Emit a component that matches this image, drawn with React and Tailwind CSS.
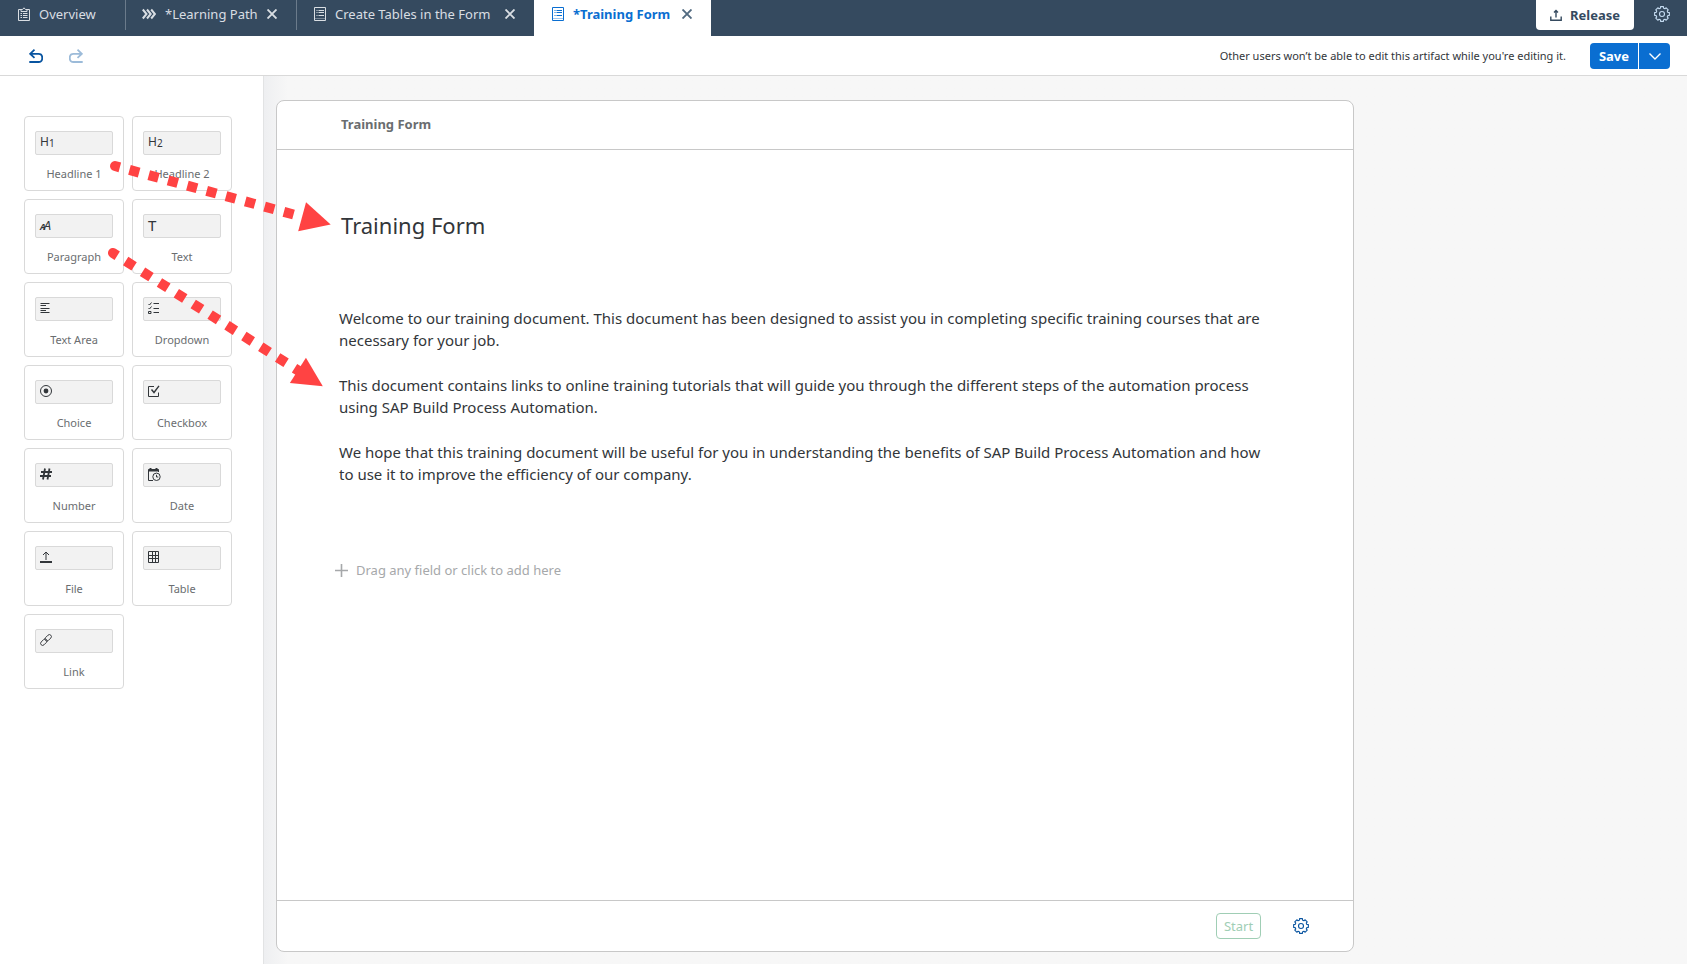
import React from "react";

function Svg({ size = 12, width = size, className = "", children, ...rest }) {
  return (
    <svg
      width={width}
      height={size}
      viewBox={`0 0 ${width} ${size}`}
      fill="none"
      stroke="currentColor"
      strokeWidth="1"
      aria-hidden="true"
      className={`block shrink-0 ${className}`}
      {...rest}
    >
      {children}
    </svg>
  );
}

const gearPath = (() => {
  const teeth = 8;
  const pts = [];
  for (let i = 0; i < teeth; i++) {
    const base = (i * 360) / teeth - 90;
    [
      [-16, 6],
      [-11, 7.5],
      [11, 7.5],
      [16, 6],
    ].forEach(([offset, radius]) => {
      const a = ((base + offset) * Math.PI) / 180;
      pts.push(`${(8 + radius * Math.cos(a)).toFixed(2)} ${(8 + radius * Math.sin(a)).toFixed(2)}`);
    });
  }
  return `M${pts.join("L")}Z`;
})();

const GearIcon = () => (
  <Svg size={16}>
    <path d={gearPath} strokeLinejoin="round" strokeWidth="1.1" />
    <circle cx="8" cy="8" r="2.500" strokeWidth="1.1" />
  </Svg>
);

const OverviewIcon = () => (
  <Svg size={14} width={12}>
    <path d="M3 2.500H.5V13.500H11.500V2.500H9M3 4.500V2.500H4.500L6 .8L7.500 2.500H9V4.500Z" />
    <path d="M2.500 6.500H4M5 6.500H9.500M2.500 8.500H4M5 8.500H9.500M2.500 10.500H4M5 10.500H9.500" />
  </Svg>
);

const FormIcon = () => (
  <Svg size={14} width={12}>
    <path d="M.5 .5H11.500V13.500H.5Z" />
    <path d="M2.500 3.500H3.500M4.500 3.500H10M2.500 5.500H3.500M4.500 5.500H10M2.500 8.500H3.500M4.500 8.500H10" />
    <path d="M1 11.500H11" opacity=".4" />
  </Svg>
);

const ProcessIcon = () => (
  <Svg size={14} strokeWidth="2">
    <path d="M.8 2.500L4.500 7L.8 11.500M5 2.500L8.700 7L5 11.500M9.200 2.500L12.900 7L9.200 11.500" />
  </Svg>
);

const CloseIcon = () => (
  <Svg size={10} strokeWidth="1.900">
    <path d="M.5 .5L9.500 9.500M9.500 .5L.5 9.500" />
  </Svg>
);

const UndoIcon = ({ flipped }) => (
  <Svg size={14} strokeWidth="1.800" className={flipped ? "-scale-x-100" : ""}>
    <path d="M5.500 .7L1.200 4.800L5.500 8.800M1.500 4.800H9.500C14.500 4.800 14.500 13 9.500 13H.3" />
  </Svg>
);

const ReleaseIcon = () => (
  <Svg size={12} strokeWidth="1.400">
    <path d="M.8 7.500V11.200H11.200V7.500M6 8.500V1.500M4 3.500L6 1.500L8 3.500" />
  </Svg>
);

const TextAreaIcon = () => (
  <Svg>
    <path d="M.5 1.500H9.500M.5 3.500H6M.5 6.500H9.500M.5 8.500H6M.5 10.500H9.500" />
  </Svg>
);

const DropdownIcon = () => (
  <Svg>
    <path d="M.5 2L1.500 3L3.500 .5M.5 6L1.500 7L3.500 4.500M.5 9.500H3V11.500H.5Z" />
    <path d="M5.500 1.500H11M5.500 6.500H11M5.500 10.500H11" />
  </Svg>
);

const ChoiceIcon = () => (
  <Svg>
    <circle cx="6" cy="6" r="5.500" />
    <circle cx="6" cy="6" r="2.400" fill="currentColor" stroke="none" />
  </Svg>
);

const CheckboxIcon = () => (
  <Svg>
    <path d="M6 1.500H.5V11.500H10.500V7.500" />
    <path d="M3.500 4.500L6 7.500L11 .8" strokeWidth="1.400" />
  </Svg>
);

const NumberIcon = () => (
  <Svg>
    <path d="M5 .5L3 11.500M9.500 .5L7.500 11.500M1 4H12M0 8H11" strokeWidth="1.800" />
  </Svg>
);

const DateIcon = () => (
  <Svg size={13}>
    <path d="M5 12.500H.5V1.500H10.500V4" />
    <path d="M.5 2.500H10.500M2.500 0V2M8.500 0V2" strokeWidth="2" />
    <circle cx="8.500" cy="8.800" r="3.700" />
    <path d="M8.500 6.800V9H10.300" />
  </Svg>
);

const FileIcon = () => (
  <Svg>
    <path d="M6 9V1M3 4L6 1L9 4" />
    <path d="M0 11H12" strokeWidth="2" />
  </Svg>
);

const TableIcon = () => (
  <Svg>
    <path d="M.5 .5H10.500V11.500H.5ZM.5 4.500H10.500M.5 7.500H10.500M4.500 .5V11.500M7.500 .5V11.500" />
  </Svg>
);

const LinkIcon = () => (
  <Svg strokeWidth=".9">
    <g transform="rotate(-45 6 6)">
      <rect x="-.8" y="4" width="7.500" height="4" rx="2" />
      <rect x="5.300" y="4" width="7.500" height="4" rx="2" />
    </g>
  </Svg>
);

const HeadingMark = ({ level }) => (
  <span className="flex items-end text-[12px] leading-3">
    H<span className="text-[10px] leading-[10px]">{level}</span>
  </span>
);

const ParagraphMark = () => (
  <span className="flex items-baseline text-[13px] italic leading-3">
    <span className="-mr-0.5 text-[9px] font-bold">A</span>A
  </span>
);

const TextMark = () => <span className="text-[15px] leading-3">T</span>;

const fields = [
  ["Headline 1", <HeadingMark level={1} />],
  ["Headline 2", <HeadingMark level={2} />],
  ["Paragraph", <ParagraphMark />],
  ["Text", <TextMark />],
  ["Text Area", <TextAreaIcon />],
  ["Dropdown", <DropdownIcon />],
  ["Choice", <ChoiceIcon />],
  ["Checkbox", <CheckboxIcon />],
  ["Number", <NumberIcon />],
  ["Date", <DateIcon />],
  ["File", <FileIcon />],
  ["Table", <TableIcon />],
  ["Link", <LinkIcon />],
];

function FieldCard({ label, icon }) {
  return (
    <button
      type="button"
      className="flex h-[75px] w-[100px] flex-col items-center rounded border border-[#d9d9d9] bg-white pt-3.5"
    >
      <span className="flex h-6 w-[78px] items-start rounded-xs border border-[#d9d9d9] bg-[#f2f2f2] px-1 pt-1 text-[#32363a]">
        {icon}
      </span>
      <span className="mt-[11px] text-[11px] leading-4 text-[#6a6d70]">{label}</span>
    </button>
  );
}

function Tab({ icon, label, closable = true, active, divider, className }) {
  return (
    <div
      className={`flex items-start ${active ? "bg-white font-bold text-[#0a6ed1]" : "text-[#d9dee3]"} ${className}`}
    >
      <button type="button" className="flex h-7 items-center gap-[9px]">
        {icon}
        <span>{label}</span>
      </button>
      {closable && (
        <button
          type="button"
          aria-label={`Close ${label}`}
          className={`ml-auto mr-[19px] flex h-7 items-center ${active ? "text-[#516a80]" : ""}`}
        >
          <CloseIcon />
        </button>
      )}
      {divider && <span className={`h-[30px] w-px bg-[#6b7b8b] ${closable ? "" : "ml-auto"}`} />}
    </div>
  );
}

function DashedArrow({ x, y, angle, lineEnd, headStart, tip }) {
  return (
    <g transform={`translate(${x} ${y}) rotate(${angle})`} fill="#ff4343" stroke="none">
      <path d="M5 -5V5H0A5 5 0 0 1 0 -5Z" />
      <path d={`M15 0H${lineEnd}`} stroke="#ff4343" strokeWidth="10" strokeDasharray="10 10" />
      <path d={`M${headStart} -15V15L${tip} 0Z`} />
    </g>
  );
}

export default function App() {
  return (
    <div className="relative flex min-h-screen flex-col bg-white pb-0.5 font-['Noto_Sans','Open_Sans',sans-serif] text-[13px] leading-5 text-[#32363a]">
      <header className="flex h-9 items-start bg-[#354a5f]">
        <nav aria-label="Open artifacts" className="flex h-9 items-stretch">
          <Tab className="w-[126px] pl-[18px]" icon={<OverviewIcon />} label="Overview" closable={false} divider />
          <Tab className="w-[171px] pl-4" icon={<ProcessIcon />} label="*Learning Path" divider />
          <Tab className="w-[237px] pl-[17px]" icon={<FormIcon />} label="Create Tables in the Form" />
          <Tab className="w-[177px] pl-[18px]" icon={<FormIcon />} label="*Training Form" active />
        </nav>
        <div className="ml-auto flex items-start gap-5 pr-[17px]">
          <button
            type="button"
            className="flex h-[30px] items-center gap-2 rounded-b bg-white px-3.5 font-bold text-[#354a5f]"
          >
            <ReleaseIcon />
            Release
          </button>
          <button type="button" aria-label="Settings" className="flex h-7 items-center text-[#c5dcf2]">
            <GearIcon />
          </button>
        </div>
      </header>

      <div className="flex h-10 items-center border-b border-[#d9d9d9] pl-[29px] pr-[17px]">
        <button type="button" aria-label="Undo" className="text-[#0854a0]">
          <UndoIcon />
        </button>
        <button type="button" aria-label="Redo" disabled className="ml-[26px] text-[#9cbbd9]">
          <UndoIcon flipped />
        </button>
        <p className="ml-auto text-[11px]">
          Other users won’t be able to edit this artifact while you're editing it.
        </p>
        <div className="ml-6 flex h-[26px] gap-px font-bold text-white">
          <button type="button" className="w-12 rounded-l bg-[#0a6ed1]">
            Save
          </button>
          <button
            type="button"
            aria-label="More save options"
            className="flex w-[31px] items-center justify-center rounded-r bg-[#0a6ed1]"
          >
            <Svg size={12} strokeWidth="1.400">
              <path d="M.5 3.500L6 9L11.500 3.500" />
            </Svg>
          </button>
        </div>
      </div>

      <div className="flex grow">
        <aside className="w-[263px] shrink-0 pl-6 pt-10">
          <div className="flex flex-wrap gap-2">
            {fields.map(([label, icon]) => (
              <FieldCard key={label} label={label} icon={icon} />
            ))}
          </div>
        </aside>

        <main className="flex grow border-l border-[#e2e3e4] bg-[#f7f7f7] bg-linear-to-r from-[#eeeff1] to-[#f7f7f7] to-[24px] pb-3 pl-3 pr-6 pt-6">
          <section className="flex w-full max-w-[1078px] flex-col rounded-lg border border-[#c8c8c8] bg-white">
            <div className="flex h-[49px] items-center border-b border-[#c8c8c8] px-16 pb-0.5 font-bold text-[#6a6d70]">
              Training Form
            </div>
            <div className="flex grow flex-col px-[62px] pt-[59px]">
              <h1 className="pl-0.5 text-[22px] leading-8">Training Form</h1>
              <div className="mt-[66px] flex flex-col gap-[23px] text-[15px] leading-[22px]">
                <p>
                  Welcome to our training document. This document has been designed to assist you in completing specific
                  training courses that are
                  <br /> necessary for your job.
                </p>
                <p>
                  This document contains links to online training tutorials that will guide you through the different
                  steps of the automation process
                  <br /> using SAP Build Process Automation.
                </p>
                <p>
                  We hope that this training document will be useful for you in understanding the benefits of SAP Build
                  Process Automation and how
                  <br /> to use it to improve the efficiency of our company.
                </p>
              </div>
              <button
                type="button"
                className="-ml-1 mt-[75px] flex items-center gap-2 self-start text-[#a6a8aa]"
              >
                <Svg size={13} strokeWidth="1.600">
                  <path d="M6.500 0V13M0 6.500H13" />
                </Svg>
                Drag any field or click to add here
              </button>
            </div>
            <div className="flex h-[51px] items-center justify-end gap-8 border-t border-[#c8c8c8] pr-11">
              <button
                type="button"
                disabled
                className="h-[26px] w-[45px] rounded border border-[#a0ceb5] text-[#a0ceb5]"
              >
                Start
              </button>
              <button type="button" aria-label="Form settings" className="text-[#0854a0]">
                <GearIcon />
              </button>
            </div>
          </section>
        </main>
      </div>

      <svg
        width="340"
        height="400"
        viewBox="0 0 340 400"
        aria-hidden="true"
        className="pointer-events-none absolute left-0 top-0"
      >
        <DashedArrow x={115} y={166} angle={15.2} lineEnd={185} headStart={193.9} tip={223.5} />
        <DashedArrow x={113} y={253} angle={32.4} lineEnd={225} headStart={219} tip={248.5} />
      </svg>
    </div>
  );
}
